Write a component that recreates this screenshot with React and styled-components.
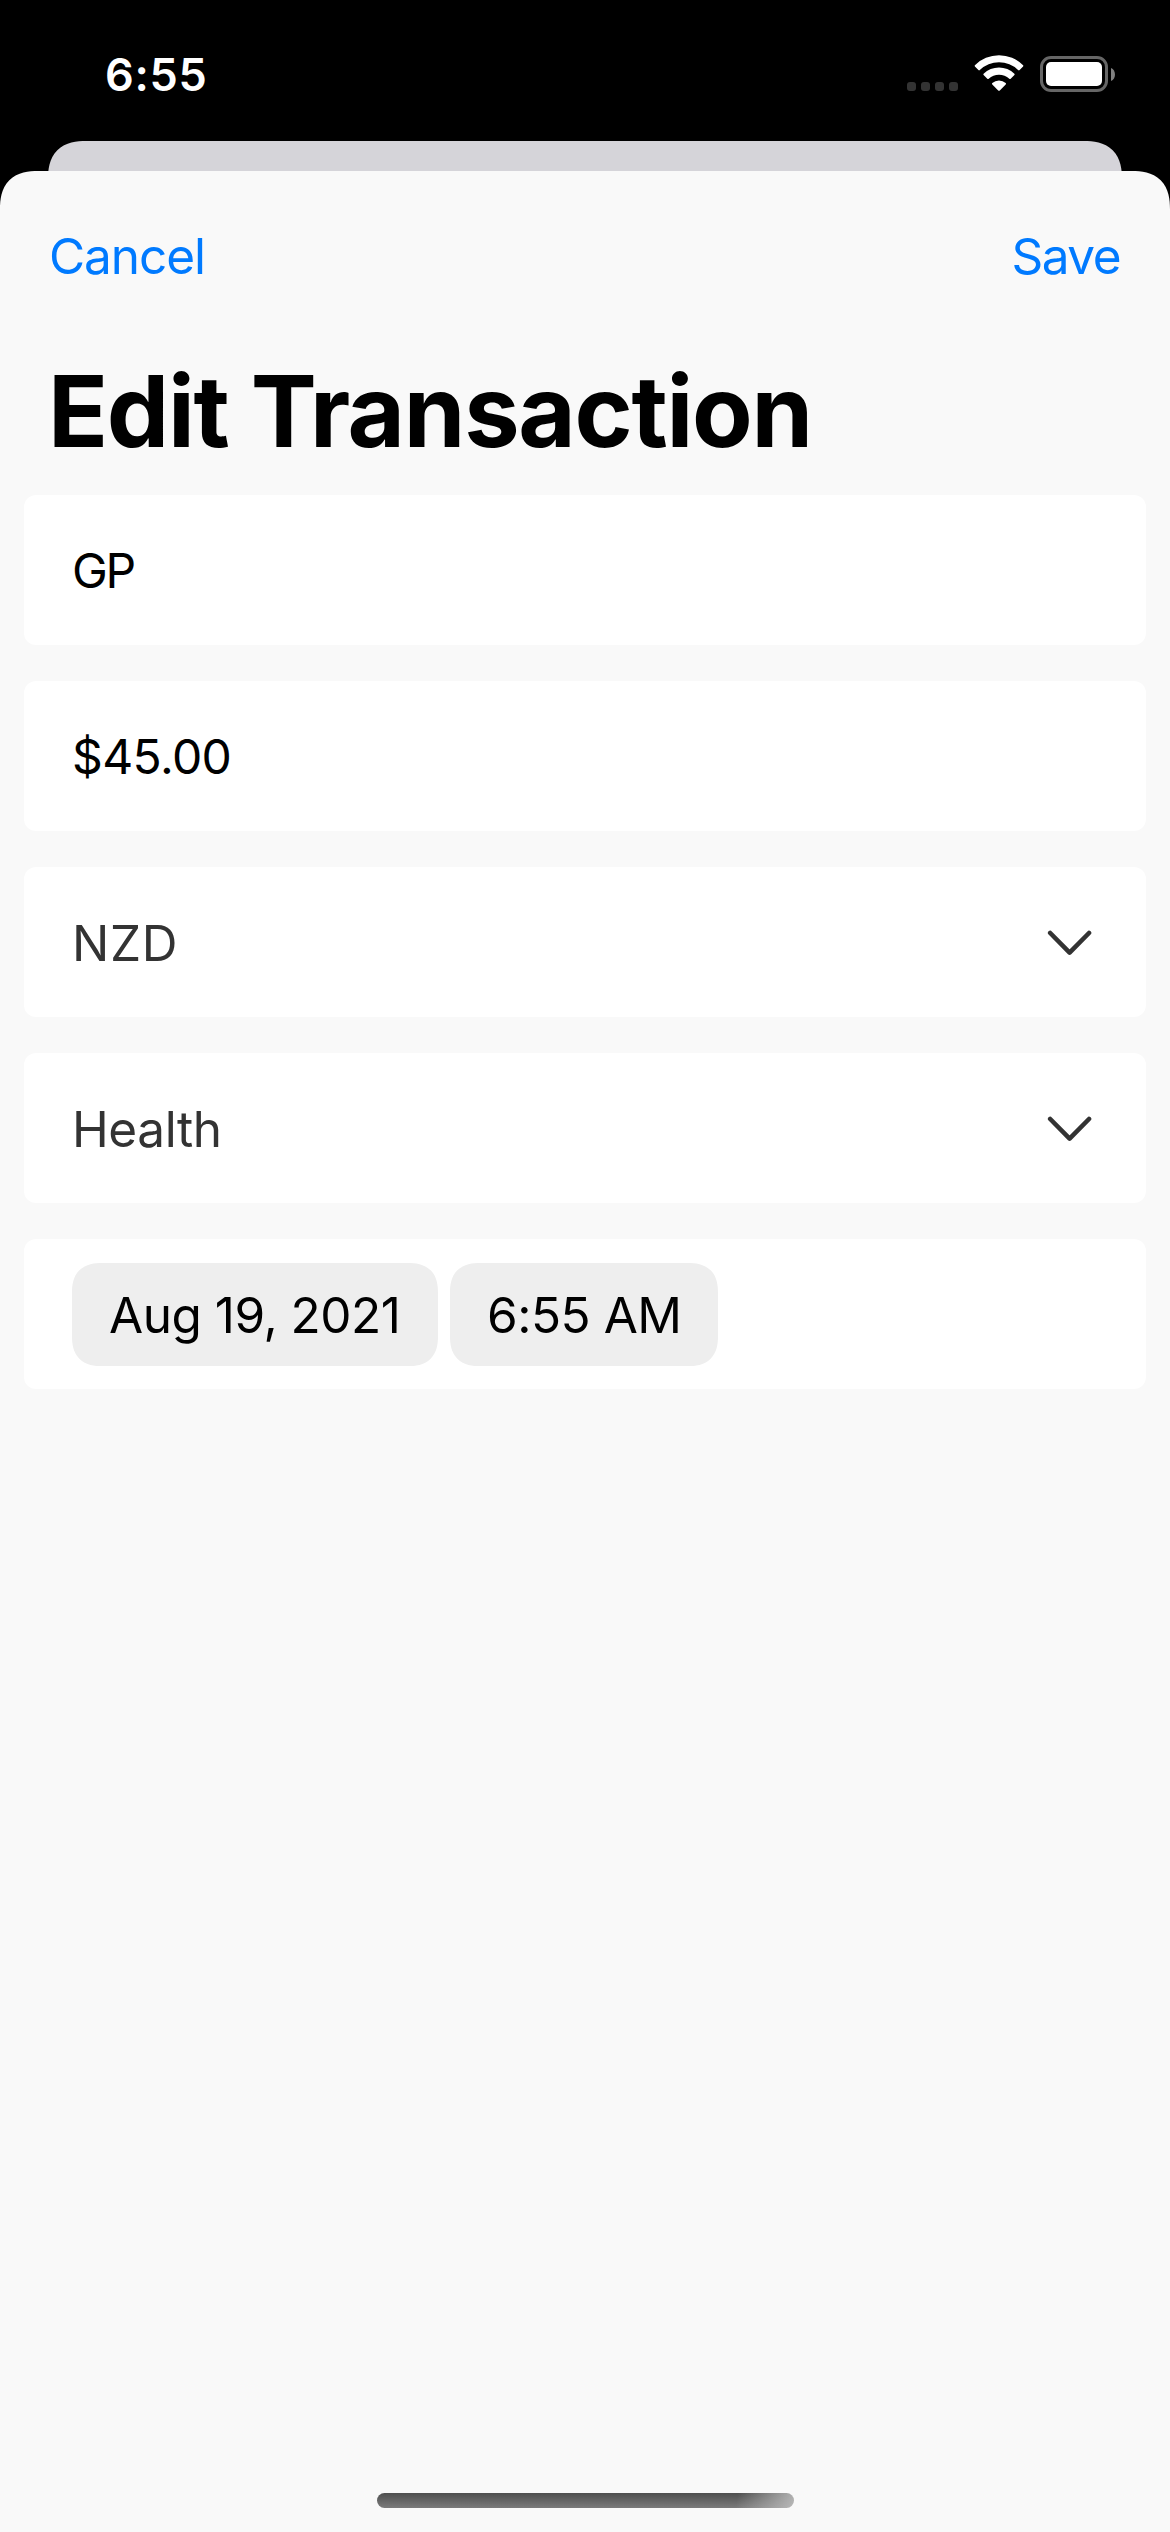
import React from "react";
import styled, { createGlobalStyle } from "styled-components";

const GlobalStyle = createGlobalStyle`
  *, *::before, *::after { box-sizing: border-box; }
  body {
    margin: 0;
    background: #000;
    font-family: Inter, Roboto, "Liberation Sans", sans-serif;
    -webkit-font-smoothing: antialiased;
  }
  button {
    margin: 0;
    padding: 0;
    border: 0;
    background: none;
    font: inherit;
    text-align: left;
  }
`;

const Screen = styled.div`
  display: flex;
  flex-direction: column;
  width: 1170px;
  height: 2532px;
  background: #000;
  overflow: hidden;
`;

const StatusBar = styled.header`
  display: flex;
  justify-content: space-between;
  height: 141px;
  padding: 45px 55px 0 105px;
`;

const Clock = styled.time`
  height: 60px;
  color: #fff;
  font-size: 45px;
  font-weight: 600;
  line-height: 60px;
  letter-spacing: 0.7px;
`;

const Indicators = styled.div`
  display: flex;
  align-items: flex-start;
  padding-top: 10px;
`;

const SignalDots = styled.div`
  display: flex;
  gap: 5px;
  margin: 27px 16px 0 0;
`;

const SignalDot = styled.span`
  width: 9px;
  height: 9px;
  border-radius: 3px;
  background: #333;
`;

const WifiGlyph = styled.svg`
  display: block;
  width: 50px;
  height: 37px;
  margin-right: 16px;
`;

const BatteryGlyph = styled.svg`
  display: block;
  width: 75px;
  height: 38px;
`;

const PreviousSheet = styled.div`
  flex: none;
  height: 60px;
  margin: 0 48px -30px;
  border-radius: 38px 38px 0 0;
  corner-shape: superellipse(1.3);
  background: #d5d4d9;
`;

const Sheet = styled.main`
  display: flex;
  flex: 1;
  flex-direction: column;
  border-radius: 38px 38px 0 0;
  corner-shape: superellipse(1.3);
  background: #f9f9f9;
  z-index: 1;
`;

const NavBar = styled.nav`
  display: flex;
  justify-content: space-between;
  align-items: center;
  height: 170px;
  padding: 0 50px 0 49px;
`;

const NavButton = styled.button`
  color: #007aff;
  font-size: 49.5px;
  line-height: 66px;
  letter-spacing: ${({ $tracking }) => $tracking}px;
`;

const Title = styled.h1`
  height: 154px;
  margin: 0;
  padding: 10px 48px 0;
  color: #000;
  font-size: 99px;
  font-weight: 700;
  line-height: 120px;
  letter-spacing: -1.27px;
`;

const Form = styled.form`
  display: flex;
  flex-direction: column;
  gap: 36px;
  padding: 0 24px;
`;

const Field = styled.div`
  display: flex;
  align-items: center;
  justify-content: space-between;
  height: 150px;
  padding: 1px 54px 0 48px;
  border-radius: 12px;
  background: #fff;
`;

const Value = styled.span`
  color: ${({ $muted }) => ($muted ? "#333" : "#000")};
  font-size: ${({ $muted }) => ($muted ? 49.5 : 48)}px;
  line-height: 66px;
  letter-spacing: ${({ $tracking }) => $tracking}px;
`;

const ChevronGlyph = styled.svg`
  display: block;
  width: 45px;
  height: 28px;
`;

const DateField = styled(Field)`
  justify-content: flex-start;
  gap: 12px;
  padding-top: 0;
`;

const Chip = styled.button`
  width: ${({ $width }) => $width}px;
  height: 103px;
  padding: 1px 0 0 37px;
  border-radius: 30px;
  corner-shape: superellipse(1.3);
  background: #eee;
  color: #000;
  font-size: 49.5px;
  line-height: 102px;
  letter-spacing: -0.48px;
  white-space: nowrap;
`;

const HomeIndicator = styled.div`
  width: 417px;
  height: 15px;
  margin: auto auto 24px 377px;
  border-radius: 7.5px;
  background:
    linear-gradient(100deg, rgba(190, 190, 190, 0) 86%, rgba(190, 190, 190, 0.9) 100%),
    linear-gradient(#4f4f4f, #7b7b7b);
`;

function Wifi() {
  return (
    <WifiGlyph viewBox="974 55 50 37" fill="#fff" aria-hidden="true">
      <path d="M974.9 65.2 A34.2 34.2 0 0 1 1023.1 65.2 Q1023.6 65.8 1023.1 66.4 L1019.6 70.1 Q1018.9 70.8 1018.2 70.1 A27.6 27.6 0 0 0 979.8 70.1 Q979.1 70.8 978.4 70.1 L974.9 66.4 Q974.4 65.8 974.9 65.2 Z" />
      <path d="M983.6 73.7 A22.2 22.2 0 0 1 1014.4 73.7 Q1015 74.4 1014.4 75.1 L1010.7 78.7 Q1010 79.4 1009.3 78.8 A15.4 15.4 0 0 0 988.7 78.8 Q988 79.4 987.3 78.7 L983.6 75.1 Q983 74.4 983.6 73.7 Z" />
      <path d="M992.3 82.9 A10.2 10.2 0 0 1 1005.7 82.9 Q1006.4 83.7 1005.7 84.4 L999.8 90.4 Q999 91.2 998.2 90.4 L992.3 84.4 Q991.6 83.7 992.3 82.9 Z" />
    </WifiGlyph>
  );
}

function Battery() {
  return (
    <BatteryGlyph viewBox="1040 55 75 38" aria-hidden="true">
      <rect x="1041.5" y="57.5" width="65" height="33" rx="9.5" fill="none" stroke="#666" strokeWidth="3" />
      <rect x="1046" y="62" width="56" height="24" rx="5" fill="#fff" />
      <path d="M1111 68 C1116.3 70 1116.3 79 1111 81 Z" fill="#808080" />
    </BatteryGlyph>
  );
}

function Chevron() {
  return (
    <ChevronGlyph viewBox="0 0 45 28" fill="none" aria-hidden="true">
      <path d="M3.2 4 L22.6 23.6 L42 4" stroke="#333" strokeWidth="4.6" strokeLinecap="round" strokeLinejoin="round" />
    </ChevronGlyph>
  );
}

export default function App() {
  return (
    <>
      <GlobalStyle />
      <Screen>
        <StatusBar>
          <Clock>6:55</Clock>
          <Indicators>
            <SignalDots>
              <SignalDot />
              <SignalDot />
              <SignalDot />
              <SignalDot />
            </SignalDots>
            <Wifi />
            <Battery />
          </Indicators>
        </StatusBar>
        <PreviousSheet />
        <Sheet>
          <NavBar>
            <NavButton $tracking={-1.06}>Cancel</NavButton>
            <NavButton $tracking={-1.5}>Save</NavButton>
          </NavBar>
          <Title>Edit Transaction</Title>
          <Form>
            <Field>
              <Value $tracking={-2.4}>GP</Value>
            </Field>
            <Field>
              <Value $tracking={-0.6}>$45.00</Value>
            </Field>
            <Field>
              <Value $muted $tracking={0.6}>NZD</Value>
              <Chevron />
            </Field>
            <Field>
              <Value $muted $tracking={-0.42}>Health</Value>
              <Chevron />
            </Field>
            <DateField>
              <Chip type="button" $width={366}>Aug 19, 2021</Chip>
              <Chip type="button" $width={268}>6:55 AM</Chip>
            </DateField>
          </Form>
          <HomeIndicator />
        </Sheet>
      </Screen>
    </>
  );
}
